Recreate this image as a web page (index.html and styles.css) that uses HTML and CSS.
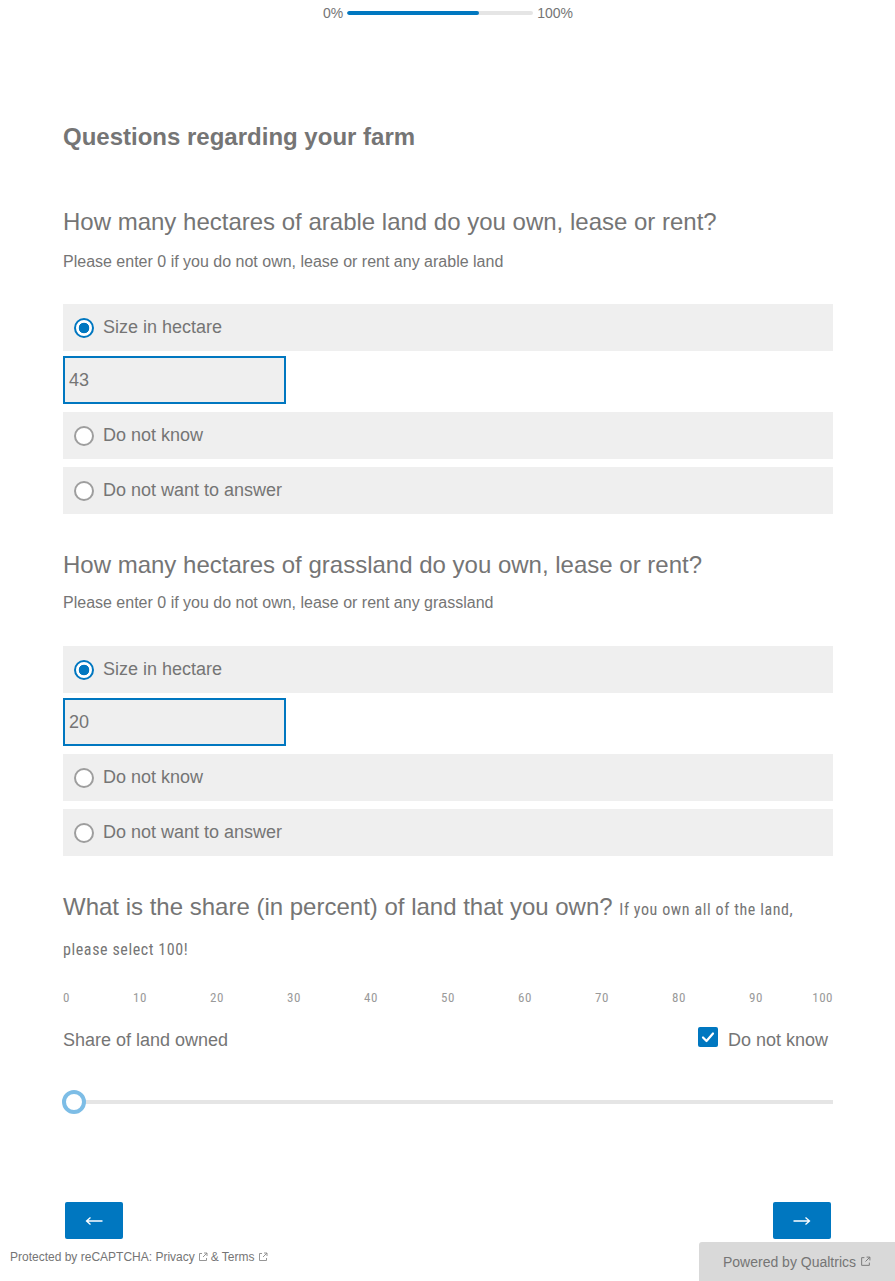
FILE: index.html
```html
<!DOCTYPE html>
<html lang="en">
<head>
<meta charset="utf-8">
<title>Questions regarding your farm</title>
<link rel="stylesheet" href="styles.css">
</head>
<body>
<div class="progress">
  <span class="progress-label">0%</span>
  <div class="progress-track"><div class="progress-fill" style="width:71%"></div></div>
  <span class="progress-label">100%</span>
</div>

<main class="page">
  <h1 class="title">Questions regarding your farm</h1>

  <section class="question q-first">
    <h2 class="q-text">How many hectares of arable land do you own, lease or rent?</h2>
    <p class="q-sub">Please enter 0 if you do not own, lease or rent any arable land</p>
    <div class="choices">
      <div class="choice-group">
        <div class="choice"><span class="radio checked"></span><span>Size in hectare</span></div>
        <div class="text-input">43</div>
      </div>
      <div class="choice"><span class="radio"></span><span>Do not know</span></div>
      <div class="choice"><span class="radio"></span><span>Do not want to answer</span></div>
    </div>
  </section>

  <section class="question q-second">
    <h2 class="q-text">How many hectares of grassland do you own, lease or rent?</h2>
    <p class="q-sub q-sub2">Please enter 0 if you do not own, lease or rent any grassland</p>
    <div class="choices">
      <div class="choice-group">
        <div class="choice"><span class="radio checked"></span><span>Size in hectare</span></div>
        <div class="text-input">20</div>
      </div>
      <div class="choice"><span class="radio"></span><span>Do not know</span></div>
      <div class="choice"><span class="radio"></span><span>Do not want to answer</span></div>
    </div>
  </section>

  <section class="question q-third">
    <h2 class="q-text q-slider-text">What is the share (in percent) of land that you own? <span class="q-inline">If you own all of the land,<br>please select 100!</span></h2>
    <div class="scale">
      <span class="tick first"><span>0</span></span>
      <span class="tick"><span>10</span></span>
      <span class="tick"><span>20</span></span>
      <span class="tick"><span>30</span></span>
      <span class="tick"><span>40</span></span>
      <span class="tick"><span>50</span></span>
      <span class="tick"><span>60</span></span>
      <span class="tick"><span>70</span></span>
      <span class="tick"><span>80</span></span>
      <span class="tick"><span>90</span></span>
      <span class="tick last"><span>100</span></span>
    </div>
    <div class="slider-row">
      <span class="slider-label">Share of land owned</span>
      <span class="dk">
        <span class="checkbox"><svg viewBox="0 0 20 20" width="20" height="20"><path d="M5 10.5 L8.5 14 L15 6.5" fill="none" stroke="#fff" stroke-width="2.2" stroke-linecap="round" stroke-linejoin="round"/></svg></span>
        <span>Do not know</span>
      </span>
    </div>
    <div class="slider">
      <span class="handle"></span>
      <span class="track"></span>
    </div>
  </section>

  <nav class="nav">
    <button class="nav-btn" type="button" aria-label="Back"><svg viewBox="0 0 18 10" width="18" height="10"><path d="M17.5 5H1.5M5.5 1.5L1.5 5L5.5 8.5" fill="none" stroke="#fff" stroke-width="1.3"/></svg></button>
    <button class="nav-btn" type="button" aria-label="Next"><svg viewBox="0 0 18 10" width="18" height="10"><path d="M0.5 5H16.5M12.5 1.5L16.5 5L12.5 8.5" fill="none" stroke="#fff" stroke-width="1.3"/></svg></button>
  </nav>
</main>

<footer class="footer">
  <span class="recaptcha">Protected by reCAPTCHA: Privacy <svg class="ext" viewBox="0 0 10 10" width="10" height="10"><path d="M4 1.5H1.5v7h7V6M6 1h3v3M9 1L5 5" fill="none" stroke="#8a8a8a" stroke-width="0.9"/></svg> &amp; Terms <svg class="ext" viewBox="0 0 10 10" width="10" height="10"><path d="M4 1.5H1.5v7h7V6M6 1h3v3M9 1L5 5" fill="none" stroke="#8a8a8a" stroke-width="0.9"/></svg></span>
  <span class="powered">Powered by Qualtrics <svg class="ext" viewBox="0 0 10 10" width="11" height="11"><path d="M4 1.5H1.5v7h7V6M6 1h3v3M9 1L5 5" fill="none" stroke="#7a7a7a" stroke-width="0.9"/></svg></span>
</footer>
</body>
</html>
```
FILE: styles.css
```css
* { box-sizing: border-box; }

html, body {
  margin: 0;
  padding: 0;
  background: #fff;
}

body {
  font-family: "Liberation Sans", Arial, sans-serif;
  color: #757575;
  width: 895px;
  height: 1281px;
  display: flex;
  flex-direction: column;
}

.progress {
  display: flex;
  align-items: center;
  justify-content: center;
  gap: 4px;
  padding-top: 5px;
  height: 21px;
  margin-left: 1px;
}

.progress-label {
  font-size: 14px;
  line-height: 16px;
  color: #757575;
}

.progress-track {
  width: 186px;
  height: 4px;
  border-radius: 2px;
  background: #e5e5e5;
  overflow: hidden;
}

.progress-fill {
  height: 100%;
  background: #0077c0;
  border-radius: 2px;
}

.page {
  width: 770px;
  margin-left: 63px;
  display: flex;
  flex-direction: column;
}

.title {
  margin: 102px 0 0;
  font-size: 24px;
  line-height: 28px;
  font-weight: bold;
  color: #757575;
}

.question { display: flex; flex-direction: column; }

.q-first { margin-top: 56px; }
.q-second { margin-top: 36px; }
.q-third { margin-top: 31px; }

.q-text {
  margin: 0;
  font-size: 24px;
  line-height: 30px;
  font-weight: normal;
  color: #757575;
}

.q-sub {
  margin: 15px 0 32px;
  font-size: 16px;
  line-height: 20px;
}

.q-sub2 { margin-top: 13px; margin-bottom: 33px; }

.choices {
  display: flex;
  flex-direction: column;
  gap: 8px;
}

.choice-group {
  display: flex;
  flex-direction: column;
  gap: 5px;
}

.choice {
  height: 47px;
  background: #efefef;
  display: flex;
  align-items: center;
  gap: 9px;
  padding-left: 11px;
  font-size: 18px;
  color: #757575;
}

.radio {
  width: 20px;
  height: 20px;
  border-radius: 50%;
  border: 2px solid #9e9e9e;
  background: #fff;
  flex: none;
}

.radio.checked {
  border-color: #0077c0;
  background: radial-gradient(circle, #0077c0 0 5px, #fff 5.6px);
}

.text-input {
  width: 223px;
  height: 48px;
  border: 2px solid #0077c0;
  background: #efefef;
  display: flex;
  align-items: center;
  padding-left: 4px;
  font-size: 18px;
  color: #757575;
}

.q-slider-text { line-height: 40px; }

.q-inline {
  font-family: "Roboto Condensed", "Liberation Sans Narrow", sans-serif;
  font-size: 16px;
  letter-spacing: 0.6px;
  line-height: 1;
}

.scale {
  margin-top: 24px;
  display: flex;
  justify-content: space-between;
  height: 14px;
  font-family: "Roboto Condensed", "Liberation Sans Narrow", sans-serif;
  font-size: 13px;
  letter-spacing: 0.5px;
  line-height: 14px;
  color: #9a9a9a;
}

.tick {
  width: 0;
  display: flex;
  justify-content: center;
  white-space: nowrap;
}

.tick.first { justify-content: flex-start; }
.tick.last { justify-content: flex-end; }

.slider-row {
  margin-top: 24px;
  display: flex;
  justify-content: space-between;
  align-items: center;
  height: 22px;
  font-size: 18px;
}

.dk {
  display: flex;
  align-items: center;
  gap: 10px;
  padding-right: 5px;
}

.checkbox {
  width: 20px;
  height: 20px;
  border-radius: 2px;
  background: #0077c0;
  display: block;
  margin-top: -6px;
}

.checkbox svg { display: block; }

.slider {
  margin-top: 39px;
  height: 24px;
  display: flex;
  align-items: center;
}

.handle {
  width: 24px;
  height: 24px;
  border-radius: 50%;
  border: 4px solid #7dbde6;
  background: #fff;
  flex: none;
  position: relative;
  z-index: 1;
  margin-left: -1px;
}

.track {
  flex: 1;
  height: 4px;
  background: #e5e5e5;
  margin-left: -2px;
}

.nav {
  margin-top: 88px;
  display: flex;
  justify-content: space-between;
  padding: 0 2px;
}

.nav-btn {
  width: 58px;
  height: 37px;
  border: none;
  border-radius: 2px;
  background: #0077c0;
  padding: 0;
  display: flex;
  align-items: center;
  justify-content: center;
  cursor: pointer;
}

.nav-btn svg { display: block; }

.footer {
  margin-top: auto;
  display: flex;
  justify-content: space-between;
  align-items: flex-start;
  height: 39px;
}

.recaptcha {
  font-size: 12px;
  line-height: 14px;
  margin-left: 10px;
  margin-top: 8px;
  color: #757575;
  display: flex;
  align-items: center;
  gap: 3px;
}

.ext { display: inline-block; }

.powered {
  width: 196px;
  height: 39px;
  background: #d9d9d9;
  border-radius: 3px 0 0 0;
  font-size: 14px;
  color: #757575;
  display: flex;
  align-items: center;
  justify-content: center;
  gap: 4px;
}
```
